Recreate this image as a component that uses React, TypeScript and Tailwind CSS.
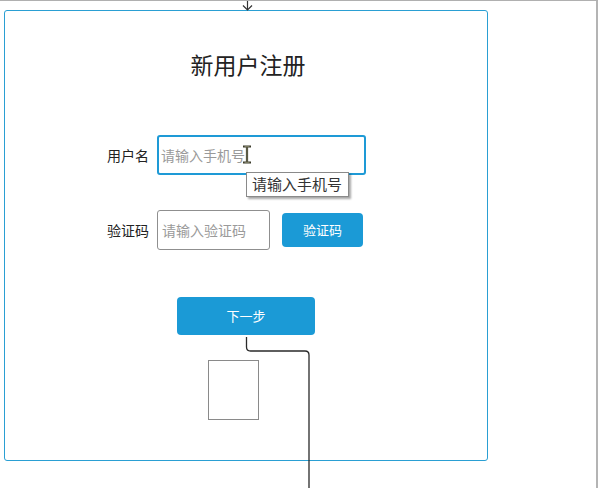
import React from "react";

export default function App() {
  const cjk = { fontFamily: '"Noto Sans CJK SC", "Noto Sans", sans-serif' } as React.CSSProperties;
  return (
    <div className="relative w-[598px] h-[488px] bg-white overflow-hidden border-t border-[#b0b0b0]" style={cjk}>
      <div className="absolute right-0 top-0 h-full w-[2px] bg-[#b4b4b4]" />
      <div className="ml-[4px] mt-[9px] w-[484px] h-[451px] border border-[#2a9fd3] rounded-[3px] flex flex-col">
        <div className="mt-[38px] h-[30px] flex items-center justify-center text-[23px] leading-[30px] text-[#222] font-normal" style={{ fontFamily: '"Noto Sans CJK SC", serif', marginLeft: '4px' }}>
          新用户注册
        </div>
        <div className="mt-[56px] flex items-center pl-[102px]">
          <span className="w-[50px] text-[14px] text-[#222]">用户名</span>
          <div className="relative">
            <div className="w-[209px] h-[40px] border-2 border-[#1e9ad6] rounded-[3px] flex items-center pl-[2px] text-[14px] text-[#9a9a9a]">
              请输入手机号
            </div>
            <svg className="absolute left-[85px] top-[10px]" width="10" height="19" viewBox="0 0 10 19">
              <path d="M1 1.5h8M1 17.5h8M5 1.5v16" stroke="#3a3a2a" strokeWidth="2.2" fill="none" />
              <path d="M2.5 1.5h5M2.5 17.5h5M5 2v15" stroke="#8a8a70" strokeWidth="0.8" fill="none" />
            </svg>
            <div className="absolute left-[89px] top-[37px] w-[103px] h-[25px] bg-white border border-[#8a8a8a] shadow-[2px_2px_2px_rgba(0,0,0,0.35)] flex items-center pl-[5px] text-[15px] text-[#333] whitespace-nowrap">
              请输入手机号
            </div>
          </div>
        </div>
        <div className="mt-[35px] flex items-center pl-[102px]">
          <span className="w-[50px] text-[14px] text-[#222]">验证码</span>
          <div className="w-[113px] h-[40px] border border-[#8f8f8f] rounded-[3px] flex items-center pl-[4px] text-[14px] text-[#9a9a9a]">
            请输入验证码
          </div>
          <div className="ml-[12px] w-[81px] h-[34px] bg-[#1b9ad6] rounded-[4px] flex items-center justify-center text-[13px] text-white">
            验证码
          </div>
        </div>
        <div className="mt-[47px] ml-[172px] w-[138px] h-[38px] bg-[#1b9ad6] rounded-[4px] flex items-center justify-center text-[13px] text-white">
          下一步
        </div>
        <div className="mt-[25px] ml-[203px] w-[51px] h-[60px] border border-[#8a8a8a]" />
      </div>
      <svg className="absolute left-0 top-0 pointer-events-none" width="598" height="488">
        <path d="M247.5 0 V9" stroke="#333" strokeWidth="1.2" fill="none" />
        <path d="M243 4.5 L247.5 9 L252 4.5" stroke="#333" strokeWidth="1.2" fill="none" />
        <path d="M246.5 336 V346 Q246.5 350 250.5 350 H305 Q309 350 309 354 V488" stroke="#2a2a2a" strokeWidth="1.3" fill="none" />
      </svg>
    </div>
  );
}
